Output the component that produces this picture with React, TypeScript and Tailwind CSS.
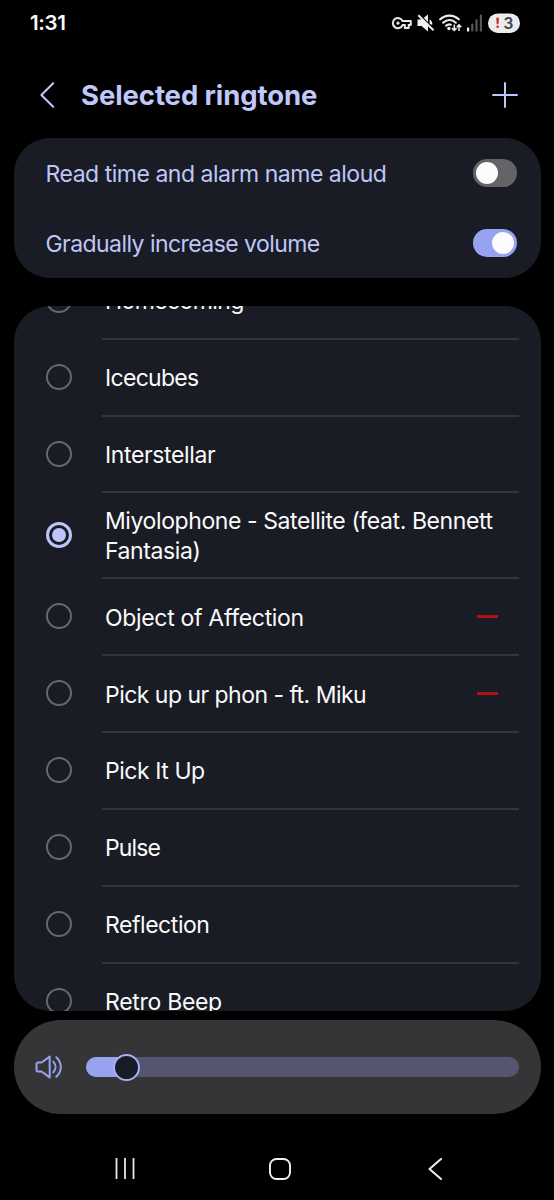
import React, {useState} from 'react';
import clsx from 'clsx';

interface Ringtone {
  name: string;
  tracking: string;
  removable?: boolean;
  tall?: boolean;
}

const ringtones: Ringtone[] = [
  {name: 'Homecoming', tracking: 'tracking-[-0.6px]'},
  {name: 'Icecubes', tracking: 'tracking-[-0.7px]'},
  {name: 'Interstellar', tracking: 'tracking-[-0.36px]'},
  {name: 'Miyolophone - Satellite (feat. Bennett Fantasia)', tracking: 'tracking-[-0.41px]', tall: true},
  {name: 'Object of Affection', tracking: 'tracking-[-0.32px]', removable: true},
  {name: 'Pick up ur phon - ft. Miku', tracking: 'tracking-[-0.53px]', removable: true},
  {name: 'Pick It Up', tracking: 'tracking-[-0.45px]'},
  {name: 'Pulse', tracking: 'tracking-[-0.85px]'},
  {name: 'Reflection', tracking: 'tracking-[-0.45px]'},
  {name: 'Retro Beep', tracking: 'tracking-[-0.3px]'},
];

const StatusBar = () => (
  <div className="flex h-[45px] items-center justify-between pl-[30px] pr-[34px]">
    <span className="pt-[2px] text-[20.5px] font-semibold leading-none tracking-[-0.3px]">1:31</span>
    <svg width="132" height="24" viewBox="388 10.5 132 24" fill="none">
      {/* vpn key */}
      <g stroke="#e9e9e9" strokeWidth="2" strokeLinejoin="round">
        <path d="M402.6 20.6a5.1 5.1 0 1 0 0 4h2.2v2.9h3.9v-2.9h2.1v-4z" />
        <circle cx="398" cy="22.6" r="1.2" fill="#e9e9e9" strokeWidth="1" />
      </g>
      {/* muted speaker */}
      <path d="M417.5 19h4l6.5-5v17l-6.5-5.5h-4z" fill="#f2f2f2" />
      <path d="M419 14l16 16" stroke="#000" strokeWidth="2" />
      <path d="M418.3 14.8l15.2 15" stroke="#f2f2f2" strokeWidth="2" />
      <path d="M429.6 18.8v4.4l2.6 1.4c.4-2.4-.6-4.6-2.6-5.8z" fill="#f2f2f2" />
      {/* wifi */}
      <g stroke="#ececec" strokeWidth="2.2" strokeLinecap="round">
        <path d="M440.2 18.8c5.6-5 13-5 18.6 0" />
        <path d="M443.2 22.2c3.9-3.4 8.8-3.4 12.6 0" />
        <path d="M446.2 25.2c1.6-1.3 3.2-1.5 4.6-1" />
      </g>
      <circle cx="448.9" cy="28" r="1.7" fill="#ececec" />
      <g stroke="#ececec" strokeWidth="1.5">
        <path d="M454.3 24v6M452 27.6l2.3 2.3 2.3-2.3M459 30.4v-6M456.8 26.6l2.2-2.2 2.3 2.2" />
      </g>
      {/* signal */}
      <rect x="467" y="27" width="2.2" height="4" rx=".6" fill="#f2f2f2" />
      <g fill="#555">
        <rect x="471.2" y="23" width="2.2" height="8" rx=".6" />
        <rect x="475.4" y="18.8" width="2.2" height="12.2" rx=".6" />
        <rect x="479.8" y="14" width="2.2" height="17" rx=".6" />
      </g>
      {/* battery */}
      <rect x="488" y="13" width="32" height="19.4" rx="9.7" fill="#ececee" />
      <path d="M496.2 17.3h2.8l-.5 6.4h-1.8z" fill="#c9302c" />
      <circle cx="497.6" cy="26.2" r="1.3" fill="#c9302c" />
      <text x="503.6" y="28.4" fontSize="15.5" fontWeight="600" fill="#3c4048">
        3
      </text>
    </svg>
  </div>
);

const Toggle = ({on, onClick}: {on: boolean; onClick: () => void}) => (
  <button
    role="switch"
    aria-checked={on}
    onClick={onClick}
    className={clsx(
      'flex h-[27.5px] w-[43.5px] items-center rounded-full px-[2.5px]',
      on ? 'justify-end bg-[#97a2f0]' : 'justify-start bg-[#646466]'
    )}
  >
    <span className="size-[22.5px] rounded-full bg-[#fcfcff]" />
  </button>
);

const Radio = ({checked}: {checked: boolean}) => (
  <span
    className={clsx(
      'flex size-[26px] shrink-0 items-center justify-center rounded-full',
      checked ? 'border-3 border-[#bcc4fb]' : 'border-2 border-[#66686e]'
    )}
  >
    {checked && <span className="size-[14px] rounded-full bg-[#bcc4fb]" />}
  </span>
);

export default function App() {
  const [readAloud, setReadAloud] = useState(false);
  const [gradual, setGradual] = useState(true);
  const [selected, setSelected] = useState(3);

  return (
    <div className="flex h-[1200px] w-[554px] flex-col overflow-hidden bg-black font-[Inter,sans-serif] text-[#fafafa]">
      <StatusBar />

      <header className="flex h-[93px] items-center pl-[40px] pr-[36px] pt-[7px] text-[#c0c7fb]">
        <svg width="15" height="26" viewBox="0 0 15 26" fill="none" stroke="currentColor" strokeWidth="2" strokeLinecap="round" strokeLinejoin="round">
          <path d="M13.2 1.3L1.4 13l11.8 11.7" />
        </svg>
        <h1 className="ml-[26px] grow whitespace-nowrap pt-[2px] text-[27.5px] font-bold leading-none tracking-[-0.1px]">
          Selected ringtone
        </h1>
        <svg width="26" height="26" viewBox="0 0 26 26" fill="none" stroke="currentColor" strokeWidth="2" strokeLinecap="round">
          <path d="M13 1v24M1 13h24" />
        </svg>
      </header>

      <section className="mx-[13.5px] h-[140px] shrink-0 rounded-[36px] bg-[#1a1c25] pl-[32px] pr-[24px] text-[23px] leading-[30px] text-[#bfc6f8]">
        <div className="flex h-[70px] items-center justify-between">
          <span className="whitespace-nowrap pt-[2px] tracking-[-0.48px]">Read time and alarm name aloud</span>
          <Toggle on={readAloud} onClick={() => setReadAloud(!readAloud)} />
        </div>
        <div className="flex h-[70px] items-center justify-between">
          <span className="whitespace-nowrap pt-[2px] tracking-[-0.56px]">Gradually increase volume</span>
          <Toggle on={gradual} onClick={() => setGradual(!gradual)} />
        </div>
      </section>

      <section className="mx-[13.5px] mt-[28px] h-[705px] shrink-0 overflow-hidden rounded-[36px] bg-[#1a1c25]">
        {/* list is scrolled part way through the first row */}
        <ul className="mt-[-43.2px]">
          {ringtones.map((tone, i) => (
            <li
              key={tone.name}
              onClick={() => setSelected(i)}
              className={clsx('flex pl-[32px] pr-[21.5px]', tone.tall ? 'h-[86px]' : 'h-[76.9px]')}
            >
              <div className="flex w-[56.5px] shrink-0 items-center pb-[3px]">
                <Radio checked={selected === i} />
              </div>
              <div className="flex grow items-center justify-between border-b-2 border-[#33353c] pl-[3px]">
                <span
                  className={clsx(
                    'pt-[2px] text-[23px] leading-[30.5px]',
                    tone.tracking,
                    tone.tall ? 'w-[400px]' : 'whitespace-nowrap'
                  )}
                >
                  {tone.name}
                </span>
                {tone.removable && <span className="mr-[21.5px] h-[3px] w-[21px] bg-[#b40f12]" />}
              </div>
            </li>
          ))}
        </ul>
      </section>

      <section className="mx-[13.5px] mt-[9px] flex h-[94px] shrink-0 items-center rounded-full bg-[#353537] pl-[21px] pr-[21.5px]">
        <svg width="28" height="24" viewBox="0 0 28 24" fill="none" stroke="#98a3f0" strokeWidth="2" strokeLinecap="round" strokeLinejoin="round">
          <path d="M3 7.5h3.5L14.7 1.6v20.8L6.5 16.5H3A1.5 1.5 0 0 1 1.5 15V9A1.5 1.5 0 0 1 3 7.5z" />
          <path d="M18.3 6.6c2.9 3.2 2.9 7.6 0 10.8M21.3 2.2c6 5.6 6 14 0 19.6" />
        </svg>
        <div className="ml-[23.5px] flex h-[19.5px] grow items-center rounded-full bg-[#53566e]">
          <div className="h-full w-[40px] rounded-l-full bg-[#98a3f0]" />
          <div className="-ml-[13px] size-[27px] rounded-full border-2 border-[#a9b1f5] bg-[#1a1c25]" />
        </div>
      </section>

      <nav className="flex grow items-center justify-between pl-[115px] pr-[111px] pt-[23px]">
        <svg width="20" height="21" viewBox="0 0 20 21" fill="none" stroke="#e6e6e6" strokeWidth="1.8">
          <path d="M1.5 0v21M10 0v21M18.5 0v21" />
        </svg>
        <svg className="mr-[4px]" width="22" height="22" viewBox="0 0 22 22" fill="none" stroke="#f0f0f0" strokeWidth="1.9">
          <rect x="1" y="1" width="20" height="20" rx="6.5" />
        </svg>
        <svg width="15" height="22" viewBox="0 0 15 22" fill="none" stroke="#f0f0f0" strokeWidth="2" strokeLinecap="round" strokeLinejoin="round">
          <path d="M13 1L1.5 11 13 21" />
        </svg>
      </nav>
    </div>
  );
}
